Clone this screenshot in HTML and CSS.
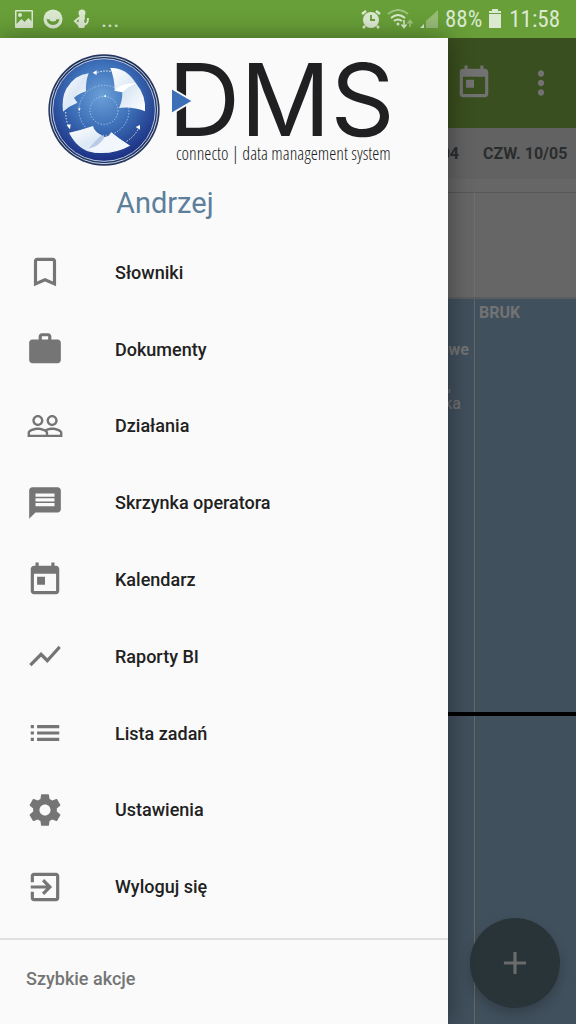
FILE: index.html
```html
<!DOCTYPE html>
<html lang="pl">
  <head>
    <meta charset="UTF-8" />
    <meta name="viewport" content="width=device-width, initial-scale=1.0" />
    <title>DMS connecto</title>
    <link rel="stylesheet" href="styles.css">
  </head>
  <body>
    <div class="status-bar">
      <div class="status-group">
        <svg width="20" height="20" viewBox="0 0 20 20" fill="currentColor">
          <path fill-rule="evenodd" d="M2 1h16a1 1 0 0 1 1 1v16a1 1 0 0 1-1 1H2a1 1 0 0 1-1-1V2a1 1 0 0 1 1-1zm.5 1.500v12.500l5-5 3 3 4-4 3 3.500V2.500z" />
          <circle cx="6" cy="6" r="2" />
        </svg>
        <svg width="20" height="20" viewBox="0 0 20 20">
          <circle cx="10" cy="10" r="9.500" fill="currentColor" />
          <path d="M3.500 9.500q1.500 1.500 3 .5q0 2.500 3.500 2.500t3.500-2.500q1.500 1 3-.5q-.5 6.500-6.500 6.500t-6.500-6.500z" fill="#689f38" />
        </svg>
        <svg width="20" height="20" viewBox="0 0 20 20" fill="currentColor">
          <circle cx="10" cy="4" r="3.500" />
          <path d="M8 6h4q2 3 0 6 2 3 1 5l-1 2H7l-2-4q2-2 2-5z" />
          <path d="M8 8l-5 4 3 3M12 15q4 1 4-6" fill="none" stroke="currentColor" stroke-width="2" />
        </svg>
        <span class="more">...</span>
      </div>
      <div class="status-group status-right">
        <svg width="20" height="20" viewBox="0 0 20 20">
          <circle cx="10" cy="11" r="8" fill="currentColor" />
          <path d="M1 5l4-3M19 5l-4-3M4 17l-2 2M16 17l2 2" stroke="currentColor" stroke-width="2.500" />
          <path d="M10 6v5h4" fill="none" stroke="#689f38" stroke-width="1.800" />
        </svg>
        <svg width="26" height="20" viewBox="0 0 26 20" fill="none" stroke="currentColor" stroke-width="2">
          <path d="M1 5q10-8 20 0" opacity=".5" />
          <path d="M4 9q7-6 14 0M7 12q4-3 8 0" />
          <circle cx="11" cy="15" r="1.500" fill="currentColor" stroke="none" />
          <path d="M17 11v7M14.500 15.500l2.500 3 2.500-3" stroke-width="1.500" />
          <path d="M23 18v-6M20.500 14.500l2.500-3 2.500 3" stroke-width="1.500" opacity=".5" />
        </svg>
        <svg width="20" height="20" viewBox="0 0 20 20" fill="currentColor">
          <path d="M7 12l12-11v18H7z" opacity=".4" />
          <path d="M1 19l4-4v4z" />
        </svg>
        <span>88%</span>
        <svg width="14" height="20" viewBox="0 0 14 20" fill="currentColor">
          <path d="M4 0h6v2h3v2H1V2h3zM1 5h12v14H1z" />
        </svg>
        <span class="clock">11:58</span>
      </div>
    </div>

    <div class="screen">
      <main class="app">
        <header class="app-bar">
          <button class="icon-btn" aria-label="Dzisiaj">
            <svg class="icon" viewBox="0 0 24 24"><path d="M19 3h-1V1h-2v2H8V1H6v2H5c-1.110 0-1.990.900-1.990 2L3 19c0 1.100.890 2 2 2h14c1.100 0 2-.900 2-2V5c0-1.100-.900-2-2-2zm0 16H5V8h14v11zM7 10h5v5H7z" /></svg>
          </button>
          <button class="icon-btn" aria-label="Menu">
            <svg class="icon" viewBox="0 0 24 24"><path d="M12 8c1.100 0 2-.900 2-2s-.900-2-2-2-2 .900-2 2 .900 2 2 2zm0 2c-1.100 0-2 .900-2 2s.900 2 2 2 2-.900 2-2-.900-2-2-2zm0 6c-1.100 0-2 .900-2 2s.900 2 2 2 2-.900 2-2-.900-2-2-2z" /></svg>
          </button>
        </header>
        <div class="days">
          <span class="day day-prev">04</span>
          <span class="day">CZW. 10/05</span>
        </div>
        <div class="all-day">
          <div></div>
          <div></div>
        </div>
        <div class="calendar">
          <div class="event event-prev">
            <b>owe</b>
            <span class="comma">,</span>
            <span class="person">ka</span>
          </div>
          <div class="event"><b>BRUK</b></div>
          <div class="now-line"></div>
        </div>
        <button class="fab" aria-label="Dodaj">
          <svg class="icon" viewBox="0 0 24 24"><path d="M19 13h-6v6h-2v-6H5v-2h6V5h2v6h6z" /></svg>
        </button>
      </main>

      <aside class="drawer">
        <div class="brand">
          <svg class="globe" viewBox="22 26 336 336">
            <defs>
              <radialGradient id="sphere" cx="48%" cy="36%" r="62%">
                <stop offset="0" stop-color="#6ba0d8" />
                <stop offset=".5" stop-color="#3d70b8" />
                <stop offset="1" stop-color="#1d3286" />
              </radialGradient>
              <linearGradient id="paper" x1="0" y1="0" x2="1" y2="1">
                <stop offset="0" stop-color="#ffffff" />
                <stop offset=".5" stop-color="#dce8f5" />
                <stop offset="1" stop-color="#ffffff" />
              </linearGradient>
            </defs>
            <circle cx="190" cy="194" r="167" fill="#26355f" />
            <circle cx="190" cy="194" r="161" fill="none" stroke="#c5d5e8" stroke-width="3" />
            <circle cx="190" cy="194" r="154" fill="url(#sphere)" stroke="#b5c9e2" stroke-width="3" />
            <g fill="none" stroke="#a9c8ea" stroke-width="3" stroke-dasharray="4 5">
              <circle cx="190" cy="195" r="42" />
              <circle cx="190" cy="195" r="75" />
              <path d="M210 78q-20-3-40 3M75 200q0 25 8 40M258 288q23-15 34-36" stroke="#fff" />
            </g>
            <g fill="url(#paper)">
              <path d="M144 84Q103 88 77 130Q62 158 67 199Q85 182 110 172L100 157Q120 142 136 138Q134 110 144 84z" />
              <path d="M209 68Q255 65 286 114Q317 152 313 198Q275 183 235 188Q246 165 245 140L222 136Q222 100 209 68z" />
              <path d="M85 262Q120 255 157 242Q160 260 192 275Q210 273 211 261Q236 282 268 301Q220 328 162 322Q113 317 85 262z" />
            </g>
            <path d="M222 136Q243 110 286 114Q264 123 245 140z" fill="#fff" />
            <path d="M143 310Q177 303 192 275Q210 273 211 261Q236 282 268 301Q205 310 162 322z" fill="#f2f7fd" />
            <path d="M143 310Q165 285 180 271L192 275Q177 303 143 310z" fill="#b9cae6" />
            <path d="M156 82l12-7v14zM78 240l12-3-2 15zM285 245l13-6v14zM112 189h8l-4 8zM188 152l8-3v7z" fill="#fff" />
          </svg>
          <div class="wordmark">
            <div class="brand-name">DMS</div>
            <div class="tagline">connecto | data management system</div>
            <svg class="play" viewBox="0 0 24 30"><path d="M1 1l22 13L1 27z" /></svg>
          </div>
        </div>
        <div class="user">Andrzej</div>

        <nav class="menu">
          <a href="#slowniki">
            <svg class="icon" viewBox="0 0 24 24"><path d="M17 3H7c-1.100 0-1.990.900-1.990 2L5 21l7-3 7 3V5c0-1.100-.900-2-2-2zm0 15l-5-2.180L7 18V5h10v13z" /></svg>
            Słowniki
          </a>
          <a href="#dokumenty">
            <svg class="icon" viewBox="0 0 24 24"><path d="M20 6h-4V4c0-1.110-.890-2-2-2h-4c-1.110 0-2 .890-2 2v2H4c-1.110 0-1.990.890-1.990 2L2 19c0 1.110.890 2 2 2h16c1.110 0 2-.890 2-2V8c0-1.110-.890-2-2-2zm-6 0h-4V4h4v2z" /></svg>
            Dokumenty
          </a>
          <a href="#dzialania">
            <svg class="icon" viewBox="0 0 24 24"><path d="M16.500 13c-1.200 0-3.070.340-4.500 1-1.430-.670-3.300-1-4.500-1C5.330 13 1 14.080 1 16.250V19h22v-2.750c0-2.170-4.330-3.250-6.500-3.250zm-4 4.500h-10v-1.250c0-.540 2.560-1.750 5-1.750s5 1.210 5 1.750v1.250zm9 0H14v-1.250c0-.460-.200-.860-.520-1.220.880-.300 1.960-.530 3.020-.530 2.440 0 5 1.210 5 1.750v1.250zM7.500 12c1.930 0 3.500-1.570 3.500-3.500S9.430 5 7.500 5 4 6.570 4 8.500 5.570 12 7.500 12zm0-5.500c1.100 0 2 .900 2 2s-.900 2-2 2-2-.900-2-2 .900-2 2-2zm9 5.500c1.930 0 3.500-1.570 3.500-3.500S18.430 5 16.500 5 13 6.570 13 8.500s1.570 3.500 3.500 3.500zm0-5.500c1.100 0 2 .900 2 2s-.900 2-2 2-2-.900-2-2 .900-2 2-2z" /></svg>
            Działania
          </a>
          <a href="#skrzynka">
            <svg class="icon" viewBox="0 0 24 24"><path d="M20 2H4c-1.100 0-1.990.900-1.990 2L2 22l4-4h14c1.100 0 2-.900 2-2V4c0-1.100-.900-2-2-2zM6 9h12v2H6V9zm12 5H6v-2h12v2zm0-6H6V6h12v2z" /></svg>
            Skrzynka operatora
          </a>
          <a href="#kalendarz">
            <svg class="icon" viewBox="0 0 24 24"><path d="M19 3h-1V1h-2v2H8V1H6v2H5c-1.110 0-1.990.900-1.990 2L3 19c0 1.100.890 2 2 2h14c1.100 0 2-.900 2-2V5c0-1.100-.900-2-2-2zm0 16H5V8h14v11zM7 10h5v5H7z" /></svg>
            Kalendarz
          </a>
          <a href="#raporty">
            <svg class="icon" viewBox="0 0 24 24"><path d="M3.500 18.490l6-6.010 4 4L22 6.920l-1.410-1.410-7.090 7.970-4-4L2 16.990z" /></svg>
            Raporty BI
          </a>
          <a href="#zadania">
            <svg class="icon" viewBox="0 0 24 24"><path d="M3 13h2v-2H3v2zm0 4h2v-2H3v2zm0-8h2V7H3v2zm4 4h14v-2H7v2zm0 4h14v-2H7v2zM7 7v2h14V7H7z" /></svg>
            Lista zadań
          </a>
          <a href="#ustawienia">
            <svg class="icon" viewBox="0 0 24 24"><path d="M19.430 12.980c.040-.320.070-.640.070-.980s-.030-.660-.070-.980l2.110-1.650c.190-.150.240-.420.120-.640l-2-3.460c-.120-.220-.390-.300-.610-.220l-2.490 1c-.520-.400-1.080-.730-1.690-.980l-.380-2.650C14.460 2.180 14.250 2 14 2h-4c-.250 0-.460.180-.490.420l-.380 2.650c-.610.250-1.170.590-1.690.980l-2.490-1c-.230-.090-.490 0-.610.220l-2 3.460c-.130.220-.070.490.120.640l2.110 1.650c-.040.320-.070.650-.070.980s.030.660.070.980l-2.110 1.650c-.190.150-.240.420-.120.640l2 3.460c.120.220.390.300.610.220l2.490-1c.520.400 1.080.730 1.690.980l.380 2.650c.030.240.240.420.490.420h4c.250 0 .460-.180.490-.420l.380-2.650c.610-.250 1.170-.590 1.690-.980l2.490 1c.230.090.490 0 .610-.220l2-3.460c.120-.220.070-.490-.120-.640l-2.110-1.650zM12 15.500c-1.930 0-3.500-1.570-3.500-3.500s1.570-3.500 3.500-3.500 3.500 1.570 3.500 3.500-1.570 3.500-3.500 3.500z" /></svg>
            Ustawienia
          </a>
          <a href="#wyloguj">
            <svg class="icon" viewBox="0 0 24 24"><path d="M10.090 15.590L11.500 17l5-5-5-5-1.410 1.410L12.670 11H3v2h9.670l-2.580 2.590zM19 3H5c-1.110 0-2 .900-2 2v4h2V5h14v14H5v-4H3v4c0 1.100.890 2 2 2h14c1.100 0 2-.900 2-2V5c0-1.100-.900-2-2-2z" /></svg>
            Wyloguj się
          </a>
        </nav>
        <div class="quick">Szybkie akcje</div>
      </aside>
    </div>
  </body>
</html>
```
FILE: styles.css
```css
* {
  box-sizing: border-box;
}
body {
  margin: 0;
  min-height: 100vh;
  display: flex;
  flex-direction: column;
  font-family: Roboto, "Noto Sans", sans-serif;
  background-color: #666;
}
button {
  border: none;
  padding: 0;
  background: none;
  cursor: pointer;
}
.icon {
  width: 38px;
  height: 38px;
  flex: none;
  fill: currentColor;
}

/* status bar */
.status-bar {
  height: 38px;
  padding: 0 16px 0 14px;
  display: flex;
  align-items: center;
  justify-content: space-between;
  background-color: #689f38;
  color: #dce9d1;
  font-family: "Roboto Condensed", "Liberation Sans Narrow", Roboto, sans-serif;
  font-size: 23px;
}
.status-group {
  display: flex;
  align-items: center;
  gap: 9px;
}
.status-right {
  gap: 6px;
}
.clock {
  margin-left: 1px;
}
.more {
  font-family: Roboto, sans-serif;
}

.screen {
  flex: 1;
  position: relative;
  display: flex;
}

/* calendar behind the drawer */
.app {
  flex: 1;
  display: flex;
  flex-direction: column;
}
.app-bar {
  height: 90px;
  padding-right: 16px;
  display: flex;
  align-items: center;
  justify-content: flex-end;
  gap: 29px;
  background-color: #3a4f1f;
}
.icon-btn {
  display: flex;
  color: #727272;
}
.days,
.all-day,
.calendar {
  display: grid;
  grid-template-columns: 1fr 101px;
}
.days {
  height: 51px;
  align-items: center;
  background-color: #626262;
  color: #2a2d2e;
  font-size: 16px;
  font-weight: 700;
}
.day {
  padding-left: 8px;
  white-space: nowrap;
}
.day-prev {
  padding-right: 16px;
  text-align: right;
}
.all-day {
  height: 118px;
  padding-top: 13px;
}
.all-day div {
  border-top: 1px solid #565656;
  border-right: 1px solid #707070;
}
.all-day div:last-child {
  border-right: none;
}
.calendar {
  flex: 1;
  position: relative;
  border-top: 2px solid #5a5d60;
  background-color: #41505d;
}
.event {
  padding: 5px 4px;
  color: #737373;
  font-size: 16px;
  line-height: 18px;
}
.event-prev {
  padding: 42px 5px 0 0;
  border-right: 1px solid #6c6660;
  text-align: right;
}
.event-prev b,
.event-prev span {
  display: block;
}
.event-prev .comma {
  padding: 18px 18px 0 0;
}
.event-prev .person {
  padding-right: 8px;
}
.now-line {
  position: absolute;
  top: 57%;
  left: 0;
  right: 0;
  height: 4px;
  background-color: #000;
}
.fab {
  position: absolute;
  right: 16px;
  bottom: 16px;
  width: 90px;
  height: 90px;
  border-radius: 50%;
  display: flex;
  align-items: center;
  justify-content: center;
  background-color: #293439;
  color: #6b6b6b;
  box-shadow: 0 6px 12px rgba(0, 0, 0, 0.2);
}

/* drawer */
.drawer {
  position: absolute;
  top: 0;
  bottom: 0;
  left: 0;
  width: calc(100% - 128px);
  display: flex;
  flex-direction: column;
  background-color: #fafafa;
  box-shadow: 0 0 24px rgba(0, 0, 0, 0.4);
}
.brand {
  padding: 16px 0 0 48px;
  display: flex;
  gap: 16px;
}
.globe {
  width: 112px;
  height: 112px;
  flex: none;
}
.wordmark {
  position: relative;
  color: #202022;
  white-space: nowrap;
}
.brand-name {
  margin-left: -8px;
  height: 88px;
  font-family: Inter, "Open Sans", sans-serif;
  font-size: 100px;
  line-height: 92px;
}
.tagline {
  font-family: "Open Sans Condensed Light", "Roboto Condensed", "Liberation Sans Narrow", sans-serif;
  font-size: 18px;
  font-weight: 300;
  line-height: 22px;
}
.play {
  position: absolute;
  top: 33px;
  left: -6px;
  width: 24px;
  height: 30px;
  fill: #3c6fb5;
  stroke: #fafafa;
  stroke-width: 2;
}
.user {
  padding-left: 116px;
  height: 68px;
  color: #5c7f9b;
  font-size: 29px;
  line-height: 74px;
}
.menu {
  flex: 1;
  display: flex;
  flex-direction: column;
  margin-bottom: 13px;
}
.menu a {
  flex: 1;
  min-height: 48px;
  padding-left: 26px;
  display: flex;
  align-items: center;
  gap: 51px;
  color: #212121;
  font-size: 18px;
  font-weight: 500;
  text-decoration: none;
}
.menu .icon {
  color: #757575;
}
.quick {
  height: 86px;
  padding-left: 26px;
  border-top: 2px solid #e0e0e0;
  color: #757575;
  font-size: 18px;
  font-weight: 500;
  line-height: 78px;
}
```
